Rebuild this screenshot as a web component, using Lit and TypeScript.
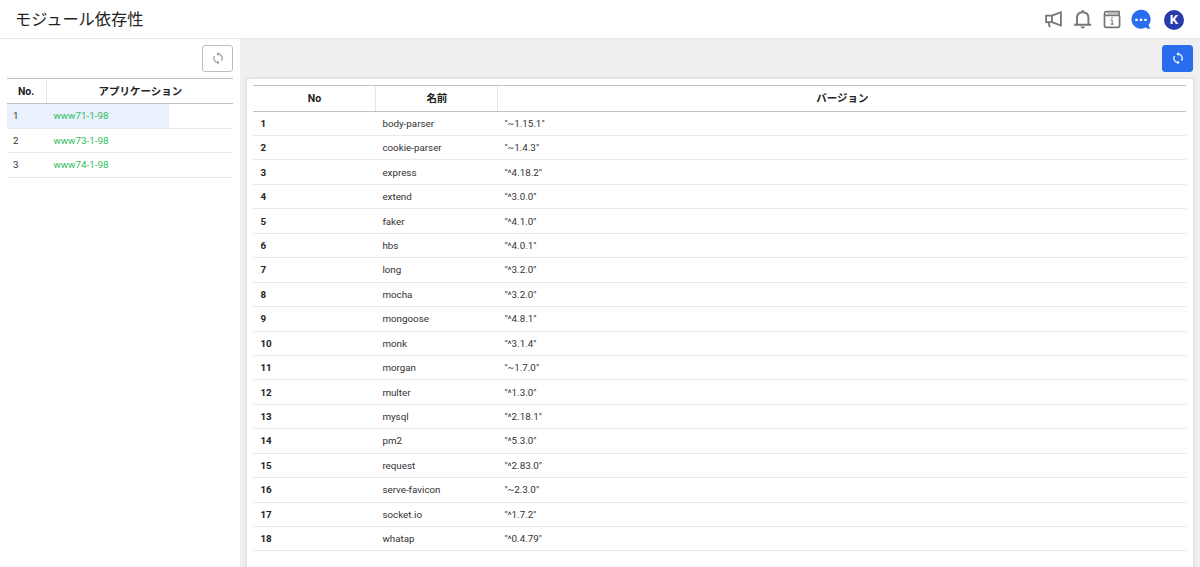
import { LitElement, html, css, svg } from "lit";
import { customElement, property } from "lit/decorators.js";
import { classMap } from "lit/directives/class-map.js";

const modules: [string, string][] = [
  ["body-parser", "~1.15.1"],
  ["cookie-parser", "~1.4.3"],
  ["express", "^4.18.2"],
  ["extend", "^3.0.0"],
  ["faker", "^4.1.0"],
  ["hbs", "^4.0.1"],
  ["long", "^3.2.0"],
  ["mocha", "^3.2.0"],
  ["mongoose", "^4.8.1"],
  ["monk", "^3.1.4"],
  ["morgan", "~1.7.0"],
  ["multer", "^1.3.0"],
  ["mysql", "^2.18.1"],
  ["pm2", "^5.3.0"],
  ["request", "^2.83.0"],
  ["serve-favicon", "~2.3.0"],
  ["socket.io", "^1.7.2"],
  ["whatap", "^0.4.79"],
];

const applications = ["www71-1-98", "www73-1-98", "www74-1-98"];

const syncGlyph = svg`
  <path fill="none" stroke="currentColor" stroke-width="1.2" d="M6 1.9A4.3 4.3 0 0 1 9.5 8.6M6 10.5A4.3 4.3 0 0 1 2.5 3.8" />
  <path fill="currentColor" d="M6.7 0v3.9L4.4 1.95zM5.3 8.5v3.9l2.3-1.95z" />`;

@customElement("sync-button")
export class SyncButton extends LitElement {
  @property({ type: Boolean }) primary = false;

  static styles = css`
    :host { display: block; }
    .button {
      display: flex;
      align-items: center;
      justify-content: center;
      box-sizing: border-box;
      width: 31.5px;
      height: 27px;
      padding: 0;
      border: 1px solid #bdbdbd;
      border-radius: 3px;
      background: #fff;
      color: #9a9a9a;
    }
    .primary { border-color: #296dee; background: #296dee; color: #fff; }
    .glyph { display: block; width: 12px; height: 12.4px; }
  `;

  render() {
    return html`<button class=${classMap({ button: true, primary: this.primary })} aria-label="更新">
      <svg class="glyph" viewBox="0 0 12 12.4">${syncGlyph}</svg>
    </button>`;
  }
}

@customElement("app-root")
export class AppRoot extends LitElement {
  static styles = css`
    :host {
      display: flex;
      flex-direction: column;
      height: 567px;
      overflow: hidden;
      background: #fff;
      color: #333;
      font: 9.8px/14px Roboto, "Noto Sans CJK JP", sans-serif;
    }
    .header {
      display: flex;
      align-items: center;
      justify-content: space-between;
      box-sizing: border-box;
      flex: none;
      height: 39px;
      padding: 0 16px 0 15px;
      border-bottom: 1px solid #e6e6e6;
    }
    .title { margin: 0; padding-top: 1px; font-size: 16.2px; line-height: 24px; font-weight: 400; color: #222; }
    .actions { display: flex; align-items: center; gap: 8px; padding-top: 1px; }
    .icon { display: block; width: 21px; height: 21px; }
    .avatar { margin-left: 4px; width: 20px; height: 20px; display: grid; place-items: center;
      border-radius: 50%; background: #283baa; color: #fff; font-size: 13px; font-weight: 700; }
    .body { display: flex; flex: 1; min-height: 0; }
    .sidebar { box-sizing: border-box; flex: none; width: 240px; padding: 0 6.6px 0 6.5px; }
    .toolbar { display: flex; justify-content: flex-end; box-sizing: border-box; height: 39px; padding-top: 6px; }
    .main { flex: 1; min-width: 0; padding: 0 6.7px 0 6.6px; background: #efefef; display: flex; flex-direction: column; }
    .card { flex: 1; box-sizing: border-box; margin-top: 1px; padding: 6.4px 7px 0 6.9px; border-radius: 3px 3px 0 0;
      background: #fff; box-shadow: 0 0 4px rgba(0, 0, 0, 0.14); }
    .row { display: grid; align-items: center; box-sizing: border-box; height: 24.45px; border-bottom: 1px solid #e8e8e8; }
    .head { height: 26.2px; border-top: 1px solid #c2c2c2; border-bottom-color: #c2c2c2; font-weight: 700; color: #222; text-align: center; }
    .apps { grid-template-columns: 39.9px 122.6px 1fr; }
    .apps.head { grid-template-columns: 39.9px 1fr; }
    .mods { grid-template-columns: 121.9px 122px 1fr; }
    .cell { box-sizing: border-box; height: 100%; padding: 1px 7px 0; display: flex; align-items: center; }
    .apps .cell:first-child { padding-left: 6.4px; }
    .head .cell { justify-content: center; font-size: 10.5px; }
    .head .cell + .cell { border-left: 1px solid #e6e6e6; }
    .selected { background: #eaf1fe; }
    .link { color: #2ebd59; }
    .number { font-weight: 700; color: #222; }
  `;

  private renderIcons() {
    return html`
      <svg class="icon" viewBox="0.5 0 21 21" fill="none" stroke="#757575" stroke-width="1.8">
        <path d="M2.6 6.6H8.4V13.1H2.6zM8.4 6.6L17.4 3.2V16.5L8.4 13.1M4.7 13.1L6.4 18.1" />
      </svg>
      <svg class="icon" viewBox="0.8 0 21 21" fill="none" stroke="#757575" stroke-width="1.9">
        <path d="M2 15.7H19M4.8 15.5V8.8C4.8 5.2 7.2 3.2 10.5 3.2S16.2 5.2 16.2 8.8V15.5M10.5 1V3" />
        <path d="M8.2 17.6H12.8Q12.3 19.5 10.5 19.5T8.2 17.6z" fill="#757575" stroke="none" />
      </svg>
      <svg class="icon" viewBox="0.3 0 21 21" fill="none" stroke="#757575" stroke-width="1.7">
        <path d="M17.9 6.4H4.2Q2.8 6.4 2.8 4.6T4.5 2.7H17.3V6.4M2.8 4.6V16.5Q2.8 18.3 4.6 18.3H16.1Q17.9 18.3 17.9 16.5V6.4" />
        <path d="M5.5 4.5H16.5" stroke-width="0.5" />
        <path d="M8.9 11H10.5V15.1M8.8 15.1H12.2" stroke-width="1" />
        <path d="M9.6 8.2H11V9.6H9.6z" fill="#757575" stroke="none" />
      </svg>
      <svg class="icon" viewBox="0.4 0 21 21">
        <path fill="#296dee" d="M10.4 .8A9.5 9.5 0 1 0 15 18.6C16.2 19.5 18 20 20 19.8Q18.4 18.4 18.1 16A9.5 9.5 0 0 0 10.4 .8z" />
        <path fill="#fff" d="M4.7 9.7h2.4v2.4H4.7zM9.2 9.7h2.4v2.4H9.2zM13.7 9.7h2.4v2.4h-2.4z" />
      </svg>`;
  }

  render() {
    return html`
      <header class="header">
        <h1 class="title">モジュール依存性</h1>
        <div class="actions">${this.renderIcons()}<div class="avatar">K</div></div>
      </header>
      <div class="body">
        <aside class="sidebar">
          <div class="toolbar"><sync-button></sync-button></div>
          <div class="row apps head"><div class="cell">No.</div><div class="cell">アプリケーション</div></div>
          ${applications.map(
            (name, i) => html`<div class="row apps">
              <div class=${classMap({ cell: true, selected: i === 0 })}>${i + 1}</div>
              <div class=${classMap({ cell: true, link: true, selected: i === 0 })}>${name}</div>
            </div>`
          )}
        </aside>
        <main class="main">
          <div class="toolbar"><sync-button primary></sync-button></div>
          <section class="card">
            <div class="row mods head"><div class="cell">No</div><div class="cell">名前</div><div class="cell">バージョン</div></div>
            ${modules.map(
              ([name, version], i) => html`<div class="row mods">
                <div class="cell number">${i + 1}</div>
                <div class="cell">${name}</div>
                <div class="cell">"${version}"</div>
              </div>`
            )}
          </section>
        </main>
      </div>`;
  }
}
